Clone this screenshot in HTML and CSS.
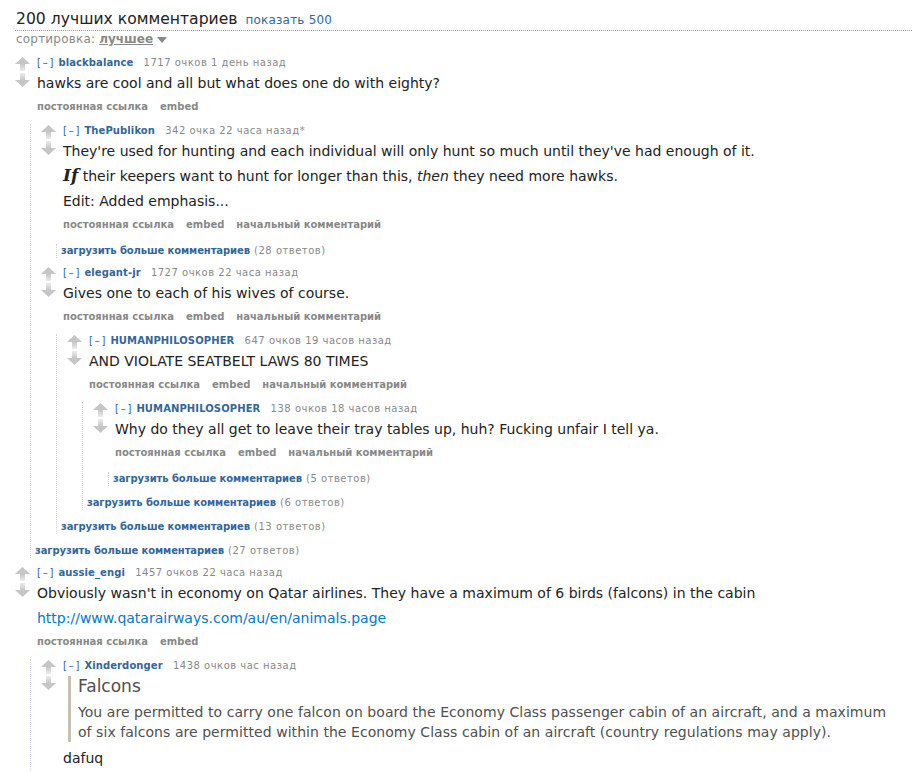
FILE: index.html
```html
<!DOCTYPE html>
<html lang="ru">
<head>
<meta charset="utf-8">
<title>comments</title>
<link rel="stylesheet" href="styles.css">
</head>
<body>
<div class="page">
  <div class="pane-title">
    <span class="title">200 лучших комментариев</span>
    <a class="show-all">показать 500</a>
  </div>
  <div class="menuarea">
    <span class="sort-label">сортировка:</span>
    <a class="sort-sel">лучшее</a><span class="dropdown-arrow"></span>
  </div>

  <div class="sitetable">
    <!-- comment 1 -->
    <div class="comment">
      <div class="row">
        <div class="midcol">
          <svg class="arrow" width="15" height="14" viewBox="0 0 15 14"><defs><linearGradient id="gu" x1="0" y1="0" x2="0" y2="1"><stop offset="0" stop-color="#c6c6c6"/><stop offset="1" stop-color="#ececec"/></linearGradient></defs><polygon points="7.5,0 15,7 0,7" fill="#c6c6c6"/><rect x="5" y="7" width="5" height="7" fill="url(#gu)"/></svg>
          <svg class="arrow" width="15" height="14" viewBox="0 0 15 14"><defs><linearGradient id="gd" x1="0" y1="0" x2="0" y2="1"><stop offset="0" stop-color="#ececec"/><stop offset="1" stop-color="#c6c6c6"/></linearGradient></defs><rect x="5" y="0" width="5" height="7" fill="url(#gd)"/><polygon points="0,7 15,7 7.5,14" fill="#c6c6c6"/></svg>
        </div>
        <div class="entry">
          <p class="tagline"><a class="expand">[–]</a> <a class="author">blackbalance</a> <span class="meta">1717 очков 1 день назад</span></p>
          <div class="md"><p>hawks are cool and all but what does one do with eighty?</p></div>
          <ul class="buttons"><li>постоянная ссылка</li><li>embed</li></ul>
        </div>
      </div>
      <div class="child">
        <!-- ThePublikon -->
        <div class="comment">
          <div class="row">
            <div class="midcol">
              <svg class="arrow" width="15" height="14" viewBox="0 0 15 14"><polygon points="7.5,0 15,7 0,7" fill="#c6c6c6"/><rect x="5" y="7" width="5" height="7" fill="url(#gu)"/></svg>
              <svg class="arrow" width="15" height="14" viewBox="0 0 15 14"><rect x="5" y="0" width="5" height="7" fill="url(#gd)"/><polygon points="0,7 15,7 7.5,14" fill="#c6c6c6"/></svg>
            </div>
            <div class="entry">
              <p class="tagline"><a class="expand">[–]</a> <a class="author">ThePublikon</a> <span class="meta">342 очка 22 часа назад*</span></p>
              <div class="md">
                <p>They're used for hunting and each individual will only hunt so much until they've had enough of it.</p>
                <p><strong class="big-if">If</strong> their keepers want to hunt for longer than this, <em>then</em> they need more hawks.</p>
                <p>Edit: Added emphasis...</p>
              </div>
              <ul class="buttons"><li>постоянная ссылка</li><li>embed</li><li>начальный комментарий</li></ul>
            </div>
          </div>
          <div class="child">
            <div class="more"><a class="more-link">загрузить больше комментариев</a> <span class="gray">(28 ответов)</span></div>
          </div>
        </div>
        <!-- elegant-jr -->
        <div class="comment">
          <div class="row">
            <div class="midcol">
              <svg class="arrow" width="15" height="14" viewBox="0 0 15 14"><polygon points="7.5,0 15,7 0,7" fill="#c6c6c6"/><rect x="5" y="7" width="5" height="7" fill="url(#gu)"/></svg>
              <svg class="arrow" width="15" height="14" viewBox="0 0 15 14"><rect x="5" y="0" width="5" height="7" fill="url(#gd)"/><polygon points="0,7 15,7 7.5,14" fill="#c6c6c6"/></svg>
            </div>
            <div class="entry">
              <p class="tagline"><a class="expand">[–]</a> <a class="author">elegant-jr</a> <span class="meta">1727 очков 22 часа назад</span></p>
              <div class="md"><p>Gives one to each of his wives of course.</p></div>
              <ul class="buttons"><li>постоянная ссылка</li><li>embed</li><li>начальный комментарий</li></ul>
            </div>
          </div>
          <div class="child">
            <!-- HP1 -->
            <div class="comment">
              <div class="row">
                <div class="midcol">
                  <svg class="arrow" width="15" height="14" viewBox="0 0 15 14"><polygon points="7.5,0 15,7 0,7" fill="#c6c6c6"/><rect x="5" y="7" width="5" height="7" fill="url(#gu)"/></svg>
                  <svg class="arrow" width="15" height="14" viewBox="0 0 15 14"><rect x="5" y="0" width="5" height="7" fill="url(#gd)"/><polygon points="0,7 15,7 7.5,14" fill="#c6c6c6"/></svg>
                </div>
                <div class="entry">
                  <p class="tagline"><a class="expand">[–]</a> <a class="author">HUMANPHILOSOPHER</a> <span class="meta">647 очков 19 часов назад</span></p>
                  <div class="md"><p>AND VIOLATE SEATBELT LAWS 80 TIMES</p></div>
                  <ul class="buttons"><li>постоянная ссылка</li><li>embed</li><li>начальный комментарий</li></ul>
                </div>
              </div>
              <div class="child">
                <!-- HP2 -->
                <div class="comment">
                  <div class="row">
                    <div class="midcol">
                      <svg class="arrow" width="15" height="14" viewBox="0 0 15 14"><polygon points="7.5,0 15,7 0,7" fill="#c6c6c6"/><rect x="5" y="7" width="5" height="7" fill="url(#gu)"/></svg>
                      <svg class="arrow" width="15" height="14" viewBox="0 0 15 14"><rect x="5" y="0" width="5" height="7" fill="url(#gd)"/><polygon points="0,7 15,7 7.5,14" fill="#c6c6c6"/></svg>
                    </div>
                    <div class="entry">
                      <p class="tagline"><a class="expand">[–]</a> <a class="author">HUMANPHILOSOPHER</a> <span class="meta">138 очков 18 часов назад</span></p>
                      <div class="md"><p>Why do they all get to leave their tray tables up, huh? Fucking unfair I tell ya.</p></div>
                      <ul class="buttons"><li>постоянная ссылка</li><li>embed</li><li>начальный комментарий</li></ul>
                    </div>
                  </div>
                  <div class="child">
                    <div class="more"><a class="more-link">загрузить больше комментариев</a> <span class="gray">(5 ответов)</span></div>
                  </div>
                </div>
                <div class="more"><a class="more-link">загрузить больше комментариев</a> <span class="gray">(6 ответов)</span></div>
              </div>
            </div>
            <div class="more"><a class="more-link">загрузить больше комментариев</a> <span class="gray">(13 ответов)</span></div>
          </div>
        </div>
        <div class="more"><a class="more-link">загрузить больше комментариев</a> <span class="gray">(27 ответов)</span></div>
      </div>
    </div>

    <!-- aussie_engi -->
    <div class="comment">
      <div class="row">
        <div class="midcol">
          <svg class="arrow" width="15" height="14" viewBox="0 0 15 14"><polygon points="7.5,0 15,7 0,7" fill="#c6c6c6"/><rect x="5" y="7" width="5" height="7" fill="url(#gu)"/></svg>
          <svg class="arrow" width="15" height="14" viewBox="0 0 15 14"><rect x="5" y="0" width="5" height="7" fill="url(#gd)"/><polygon points="0,7 15,7 7.5,14" fill="#c6c6c6"/></svg>
        </div>
        <div class="entry">
          <p class="tagline"><a class="expand">[–]</a> <a class="author">aussie_engi</a> <span class="meta">1457 очков 22 часа назад</span></p>
          <div class="md">
            <p>Obviously wasn't in economy on Qatar airlines. They have a maximum of 6 birds (falcons) in the cabin</p>
            <p><a class="md-link">http://www.qatarairways.com/au/en/animals.page</a></p>
          </div>
          <ul class="buttons"><li>постоянная ссылка</li><li>embed</li></ul>
        </div>
      </div>
      <div class="child">
        <div class="comment">
          <div class="row">
            <div class="midcol">
              <svg class="arrow" width="15" height="14" viewBox="0 0 15 14"><polygon points="7.5,0 15,7 0,7" fill="#c6c6c6"/><rect x="5" y="7" width="5" height="7" fill="url(#gu)"/></svg>
              <svg class="arrow" width="15" height="14" viewBox="0 0 15 14"><rect x="5" y="0" width="5" height="7" fill="url(#gd)"/><polygon points="0,7 15,7 7.5,14" fill="#c6c6c6"/></svg>
            </div>
            <div class="entry">
              <p class="tagline"><a class="expand">[–]</a> <a class="author">Xinderdonger</a> <span class="meta">1438 очков час назад</span></p>
              <div class="md">
                <blockquote>
                  <h3>Falcons</h3>
                  <p>You are permitted to carry one falcon on board the Economy Class passenger cabin of an aircraft, and a maximum of six falcons are permitted within the Economy Class cabin of an aircraft (country regulations may apply).</p>
                </blockquote>
                <p>dafuq</p>
              </div>
            </div>
          </div>
        </div>
      </div>
    </div>
  </div>
</div>
</body>
</html>
```

FILE: styles.css
```css
* { box-sizing: border-box; }
html, body { margin: 0; padding: 0; background: #fff; }
body {
  font-family: "DejaVu Sans", Verdana, sans-serif;
  color: #222;
  overflow: hidden;
}
a { text-decoration: none; cursor: pointer; }
.page { padding-left: 15px; padding-top: 9px; }

.pane-title {
  display: flex;
  align-items: baseline;
  gap: 8px;
  padding-left: 1px;
  height: 22px;
  border-bottom: 1px dotted #999;
}
.title { font-size: 15.6px; color: #222; line-height: 20px; }
.show-all { font-size: 12px; color: #369; letter-spacing: 0.2px; }

.menuarea {
  font-size: 12px;
  color: #888;
  line-height: 15px;
  padding-top: 1px;
  padding-left: 1px;
  display: flex;
  align-items: center;
}
.sort-label { margin-right: 4px; letter-spacing: 0.2px; }
.sort-sel { color: #888; font-weight: bold; text-decoration: underline; }
.dropdown-arrow {
  display: inline-block;
  width: 0; height: 0;
  border-left: 5px solid transparent;
  border-right: 5px solid transparent;
  border-top: 6px solid #888;
  margin-left: 4px;
  margin-top: 1px;
}

.sitetable { padding-top: 9px; }

.comment { margin-top: 10px; }
.sitetable > .comment:first-child { margin-top: 0; }
.row { display: flex; align-items: flex-start; }
.midcol {
  width: 15px;
  margin-right: 7px;
  margin-top: 1px;
  display: flex;
  flex-direction: column;
  gap: 2px;
  flex: none;
}
.arrow { display: block; }
.entry { flex: 1; min-width: 0; }

.tagline {
  margin: 0;
  font-size: 10px;
  line-height: 14px;
  color: #888;
}
.expand { color: #369; letter-spacing: 1.8px; }
.author { color: #369; font-weight: bold; letter-spacing: 0.1px; }
.meta { margin-left: 7px; letter-spacing: 0.5px; }

.md {
  font-size: 14px;
  color: #222;
  margin-top: 3px;
}
.md p { margin: 0 0 5px 0; line-height: 20px; }
.md a.md-link { color: #0079d3; }
.big-if { font-family: "DejaVu Serif", serif; font-style: italic; font-size: 17px; line-height: 14px; }

.buttons {
  list-style: none;
  margin: 7px 0 0 0;
  padding: 0;
  display: flex;
  gap: 12px;
  font-size: 10px;
  line-height: 14px;
  font-weight: bold;
  color: #888;
}

.child {
  margin-left: 15px;
  border-left: 1px dotted #ccf;
}
.child > .comment { margin-left: 10px; }

.more {
  margin-top: 12px;
  margin-bottom: -2px;
  padding-left: 4px;
  font-size: 10px;
  line-height: 14px;
}
.more-link { color: #369; font-weight: bold; letter-spacing: -0.1px; }
.gray { color: #888; letter-spacing: 0.5px; margin-left: 1px; }

blockquote {
  margin: 0 0 6px 5px;
  padding: 0 22px 0 7px;
  border-left: 3px solid #c5c1ad;
  color: #4f4f4f;
}
blockquote h3 {
  margin: 0 0 6px 0;
  font-size: 17px;
  font-weight: normal;
  line-height: 20px;
}
blockquote p { margin: 0; letter-spacing: 0.05px; }
```
